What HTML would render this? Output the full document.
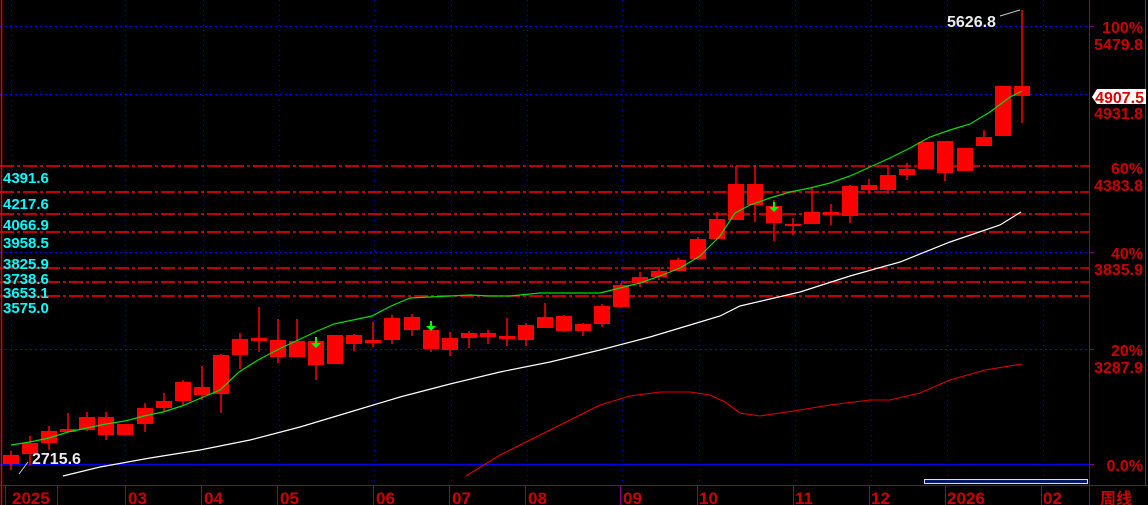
<!DOCTYPE html>
<html><head><meta charset="utf-8"><style>
html,body{margin:0;padding:0;background:#000;width:1148px;height:505px;overflow:hidden}
svg{display:block}
text{font-family:"Liberation Sans","Noto Sans CJK SC",sans-serif;font-weight:bold}
</style></head><body>
<svg width="1148" height="505" viewBox="0 0 1148 505" xmlns="http://www.w3.org/2000/svg">
<rect width="1148" height="505" fill="#000"/>
<g stroke="#0000d0" stroke-width="1" stroke-dasharray="1,4">
<line x1="11.5" y1="0" x2="11.5" y2="485"/><line x1="125.5" y1="0" x2="125.5" y2="485"/><line x1="203.5" y1="0" x2="203.5" y2="485"/><line x1="279.5" y1="0" x2="279.5" y2="485"/><line x1="374.5" y1="0" x2="374.5" y2="485"/><line x1="451.5" y1="0" x2="451.5" y2="485"/><line x1="527.5" y1="0" x2="527.5" y2="485"/><line x1="622.5" y1="0" x2="622.5" y2="485"/><line x1="699.5" y1="0" x2="699.5" y2="485"/><line x1="795.5" y1="0" x2="795.5" y2="485"/><line x1="871.5" y1="0" x2="871.5" y2="485"/><line x1="947.5" y1="0" x2="947.5" y2="485"/><line x1="1043.5" y1="0" x2="1043.5" y2="485"/>
</g>
<g stroke="#0000ff" stroke-width="1" stroke-dasharray="2,3">
<line x1="0" y1="26.5" x2="1089" y2="26.5"/><line x1="0" y1="94.5" x2="1089" y2="94.5"/><line x1="0" y1="252.5" x2="1089" y2="252.5"/><line x1="0" y1="349.5" x2="1089" y2="349.5"/>
</g>
<line x1="0" y1="464.5" x2="1089" y2="464.5" stroke="#0000e0" stroke-width="1.5"/>
<g stroke="#ff0000" stroke-width="1.5" stroke-dasharray="14,3,3,3">
<line x1="0" y1="166" x2="1089" y2="166"/><line x1="0" y1="192" x2="1089" y2="192"/><line x1="0" y1="214" x2="1089" y2="214"/><line x1="0" y1="232" x2="1089" y2="232"/><line x1="0" y1="268" x2="1089" y2="268"/><line x1="0" y1="282" x2="1089" y2="282"/><line x1="0" y1="296" x2="1089" y2="296"/>
</g>
<g fill="#ff0000" stroke="#ff0000">
<g stroke-width="1.5">
<line x1="11" y1="451" x2="11" y2="470"/><line x1="30" y1="436" x2="30" y2="465"/><line x1="49" y1="426" x2="49" y2="450"/><line x1="68" y1="413" x2="68" y2="432"/><line x1="87" y1="412" x2="87" y2="431"/><line x1="106" y1="412" x2="106" y2="440"/><line x1="145" y1="403" x2="145" y2="432"/><line x1="164" y1="393" x2="164" y2="412"/><line x1="183" y1="380" x2="183" y2="405"/><line x1="202" y1="366" x2="202" y2="400"/><line x1="221" y1="354" x2="221" y2="413"/><line x1="240" y1="333" x2="240" y2="369"/><line x1="259" y1="307" x2="259" y2="352"/><line x1="278" y1="319" x2="278" y2="363"/><line x1="297" y1="319" x2="297" y2="357"/><line x1="316" y1="337" x2="316" y2="380"/><line x1="354" y1="334" x2="354" y2="351"/><line x1="373" y1="322" x2="373" y2="347"/><line x1="392" y1="315" x2="392" y2="344"/><line x1="412" y1="314" x2="412" y2="336"/><line x1="431" y1="321" x2="431" y2="352"/><line x1="450" y1="332" x2="450" y2="356"/><line x1="469" y1="331" x2="469" y2="348"/><line x1="488" y1="330" x2="488" y2="344"/><line x1="507" y1="318" x2="507" y2="346"/><line x1="526" y1="323" x2="526" y2="346"/><line x1="545" y1="303" x2="545" y2="328"/><line x1="564" y1="315" x2="564" y2="332"/><line x1="583" y1="323" x2="583" y2="336"/><line x1="602" y1="304" x2="602" y2="327"/><line x1="621" y1="283" x2="621" y2="308"/><line x1="640" y1="272" x2="640" y2="287"/><line x1="659" y1="267" x2="659" y2="280"/><line x1="678" y1="258" x2="678" y2="271"/><line x1="698" y1="237" x2="698" y2="260"/><line x1="717" y1="212" x2="717" y2="239"/><line x1="736" y1="166" x2="736" y2="220"/><line x1="755" y1="165" x2="755" y2="222"/><line x1="774" y1="200" x2="774" y2="241"/><line x1="793" y1="218" x2="793" y2="235"/><line x1="812" y1="187" x2="812" y2="224"/><line x1="831" y1="204" x2="831" y2="225"/><line x1="850" y1="185" x2="850" y2="223"/><line x1="869" y1="179" x2="869" y2="194"/><line x1="888" y1="165" x2="888" y2="194"/><line x1="907" y1="163" x2="907" y2="180"/><line x1="945" y1="141" x2="945" y2="181"/><line x1="984" y1="130" x2="984" y2="146"/><line x1="1022" y1="10" x2="1022" y2="123"/>
</g>
<g stroke="none">
<rect x="3" y="455" width="16" height="9"/><rect x="22" y="443" width="16" height="11"/><rect x="41" y="431" width="16" height="12"/><rect x="60" y="429" width="16" height="3"/><rect x="79" y="417" width="16" height="13"/><rect x="98" y="417" width="16" height="18"/><rect x="117" y="424" width="16" height="11"/><rect x="137" y="408" width="16" height="16"/><rect x="156" y="401" width="16" height="7"/><rect x="175" y="382" width="16" height="19"/><rect x="194" y="387" width="16" height="8"/><rect x="213" y="355" width="16" height="39"/><rect x="232" y="339" width="16" height="16"/><rect x="251" y="338" width="16" height="3"/><rect x="270" y="340" width="16" height="17"/><rect x="289" y="341" width="16" height="16"/><rect x="308" y="341" width="16" height="24"/><rect x="327" y="335" width="16" height="29"/><rect x="346" y="335" width="16" height="9"/><rect x="365" y="340" width="16" height="3"/><rect x="384" y="318" width="16" height="22"/><rect x="404" y="317" width="16" height="13"/><rect x="423" y="330" width="16" height="19"/><rect x="442" y="338" width="16" height="12"/><rect x="461" y="333" width="16" height="5"/><rect x="480" y="333" width="16" height="4"/><rect x="499" y="336" width="16" height="3"/><rect x="518" y="325" width="16" height="15"/><rect x="537" y="317" width="16" height="11"/><rect x="556" y="316" width="16" height="15"/><rect x="575" y="324" width="16" height="7"/><rect x="594" y="306" width="16" height="18"/><rect x="613" y="285" width="16" height="22"/><rect x="632" y="277" width="16" height="6"/><rect x="651" y="271" width="16" height="6"/><rect x="670" y="260" width="16" height="11"/><rect x="690" y="239" width="16" height="20"/><rect x="709" y="219" width="16" height="20"/><rect x="728" y="184" width="16" height="36"/><rect x="747" y="184" width="16" height="21"/><rect x="766" y="206" width="16" height="17"/><rect x="785" y="224" width="16" height="2"/><rect x="804" y="212" width="16" height="12"/><rect x="823" y="212" width="16" height="3"/><rect x="842" y="186" width="16" height="30"/><rect x="861" y="185" width="16" height="5"/><rect x="880" y="175" width="16" height="15"/><rect x="899" y="169" width="16" height="6"/><rect x="918" y="142" width="16" height="27"/><rect x="937" y="141" width="16" height="32"/><rect x="957" y="148" width="16" height="23"/><rect x="976" y="137" width="16" height="9"/><rect x="995" y="86" width="16" height="50"/><rect x="1014" y="86" width="16" height="10"/>
</g>
</g>
<polyline fill="none" stroke="#00e000" stroke-width="1.2" points="11,445 30,442 49,438 68,432 87,428 106,424 125,421 144,416 163,412 182,406 201,398 220,390 239,372 258,360 277,350 296,341 315,332 334,324 353,320 372,316 391,306 410,298 430,297 450,296 470,295 490,296 510,296 540,293 580,293 600,293 620,288 640,283 660,276 680,268 700,256 720,236 735,213 750,205 770,198 790,192 810,188 830,183 850,176 870,167 890,158 910,148 930,137 950,130 970,124 990,112 1010,97 1022,91"/>
<polyline fill="none" stroke="#ffffff" stroke-width="1.2" points="63,476 100,467 150,458 200,450 250,440 300,427 350,412 400,397 450,384 500,372 550,362 600,350 650,337 700,322 720,316 740,306 800,292 850,276 900,262 950,242 1000,225 1021,212"/>
<polyline fill="none" stroke="#e00000" stroke-width="1.1" points="466,476 500,455 550,430 600,405 630,396 660,392 690,392 710,395 725,402 740,413 760,416 800,410 830,405 870,400 890,400 920,393 950,380 985,370 1022,364"/>
<g fill="#00ff00" stroke="#00ff00" stroke-width="2">
<line x1="316" y1="337" x2="316" y2="344"/><polygon points="311,343 321,343 316,348" stroke="none"/>
<line x1="431" y1="321" x2="431" y2="327"/><polygon points="426,326 436,326 431,331" stroke="none"/>
<line x1="774" y1="202" x2="774" y2="208"/><polygon points="769,207 779,207 774,212" stroke="none"/>
</g>
<line x1="1000" y1="16" x2="1020" y2="10" stroke="#ccc" stroke-width="1"/>
<line x1="19" y1="474" x2="28" y2="462" stroke="#ccc" stroke-width="1"/>
<text x="947" y="27" fill="#ececec" font-size="16">5626.8</text>
<text x="32" y="464" fill="#ececec" font-size="16">2715.6</text>
<g fill="#00ffff" font-size="15">
<text x="3" y="183">4391.6</text><text x="3" y="209">4217.6</text><text x="3" y="230">4066.9</text><text x="3" y="248">3958.5</text><text x="3" y="269">3825.9</text><text x="3" y="284">3738.6</text><text x="3" y="298">3653.1</text><text x="3" y="313">3575.0</text>
</g>
<line x1="1.5" y1="0" x2="1.5" y2="505" stroke="#e00000" stroke-width="1.5"/>
<line x1="1089.5" y1="0" x2="1089.5" y2="505" stroke="#800080"/>
<line x1="1145.5" y1="0" x2="1145.5" y2="485" stroke="#e00000"/>
<g stroke="#800080"><line x1="1089" y1="26.5" x2="1094" y2="26.5"/><line x1="1089" y1="252.5" x2="1094" y2="252.5"/><line x1="1089" y1="349.5" x2="1094" y2="349.5"/><line x1="1089" y1="464.5" x2="1094" y2="464.5"/></g>
<g stroke="#e00000"><line x1="1080" y1="166" x2="1087" y2="166"/><line x1="1080" y1="192" x2="1087" y2="192"/><line x1="1080" y1="214" x2="1087" y2="214"/><line x1="1080" y1="232" x2="1087" y2="232"/><line x1="1080" y1="268" x2="1087" y2="268"/><line x1="1080" y1="282" x2="1087" y2="282"/><line x1="1080" y1="296" x2="1087" y2="296"/></g>
<g fill="#cc0000" font-size="16" text-anchor="end">
<text x="1143" y="33">100%</text><text x="1143" y="50">5479.8</text><text x="1143" y="119">4931.8</text><text x="1143" y="174">60%</text><text x="1143" y="191">4383.8</text><text x="1143" y="259">40%</text><text x="1143" y="275">3835.9</text><text x="1143" y="356">20%</text><text x="1143" y="373">3287.9</text><text x="1143" y="471">0.0%</text>
</g>
<polygon points="1092,97 1097,89 1146,89 1146,104 1097,104" fill="#fff"/>
<text x="1144" y="103" fill="#e00000" font-size="16" text-anchor="end">4907.5</text>
<line x1="0" y1="485.5" x2="1148" y2="485.5" stroke="#800080"/>
<rect x="924.5" y="479.5" width="163" height="4" fill="#001a66" stroke="#dde" stroke-width="1"/>
<g stroke="#800080"><line x1="5.5" y1="486" x2="5.5" y2="505"/><line x1="57.5" y1="486" x2="57.5" y2="505"/><line x1="125.5" y1="486" x2="125.5" y2="505"/><line x1="201.5" y1="486" x2="201.5" y2="505"/><line x1="277.5" y1="486" x2="277.5" y2="505"/><line x1="373.5" y1="486" x2="373.5" y2="505"/><line x1="449.5" y1="486" x2="449.5" y2="505"/><line x1="525.5" y1="486" x2="525.5" y2="505"/><line x1="620.5" y1="486" x2="620.5" y2="505"/><line x1="697.5" y1="486" x2="697.5" y2="505"/><line x1="793.5" y1="486" x2="793.5" y2="505"/><line x1="869.5" y1="486" x2="869.5" y2="505"/><line x1="945.5" y1="486" x2="945.5" y2="505"/><line x1="1041.5" y1="486" x2="1041.5" y2="505"/></g>
<g fill="#cc0000" font-size="17">
<text x="12" y="504">2025</text><text x="128" y="504">03</text><text x="204" y="504">04</text><text x="280" y="504">05</text><text x="376" y="504">06</text><text x="452" y="504">07</text><text x="528" y="504">08</text><text x="623" y="504">09</text><text x="699" y="504">10</text><text x="795" y="504">11</text><text x="871" y="504">12</text><text x="947" y="504">2026</text><text x="1043" y="504">02</text><text x="1100" y="504" font-weight="normal" font-size="16">周线</text>
</g>
</svg>
</body></html>
